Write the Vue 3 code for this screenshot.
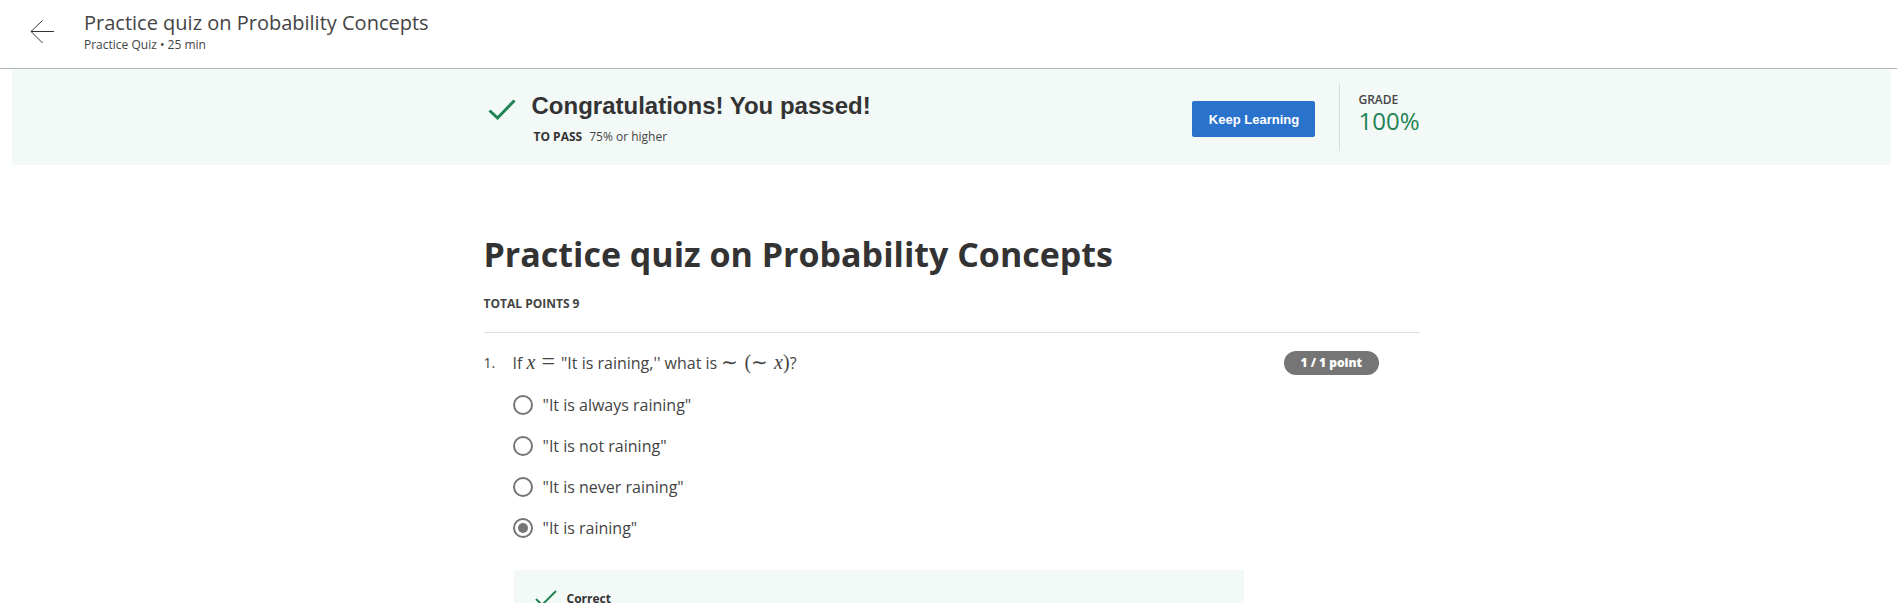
<script setup>
import { ref } from 'vue'

const options = [
  '"It is always raining"',
  '"It is not raining"',
  '"It is never raining"',
  '"It is raining"',
]
const answer = ref(3)
</script>

<template>
  <div class="page">
    <header class="top">
      <a class="back" href="#" aria-label="Back">
        <svg width="24" height="24" viewBox="0 0 24 24" fill="none" stroke="#333" stroke-width="1">
          <path d="M24 11.5H1M12.5 0.5L1 11.5L12.5 23" />
        </svg>
      </a>
      <div>
        <div class="top-title">Practice quiz on Probability Concepts</div>
        <div class="top-sub">Practice Quiz • 25 min</div>
      </div>
    </header>

    <section class="banner">
      <div class="column banner-row">
        <svg class="tick" width="28" height="22" viewBox="0 0 28 22" fill="none" stroke="#1f8354" stroke-width="3">
          <path d="M1.5 11.5L9.5 19L26.5 1.5" />
        </svg>
        <div class="result">
          <h2>Congratulations! You passed!</h2>
          <p><b>TO PASS</b><span>75% or higher</span></p>
        </div>
        <button class="keep" type="button">Keep Learning</button>
        <div class="grade">
          <div class="grade-label">GRADE</div>
          <div class="grade-value">100%</div>
        </div>
      </div>
    </section>

    <main class="content">
      <div class="column">
        <h1>Practice quiz on Probability Concepts</h1>
        <div class="total">TOTAL POINTS 9</div>
        <div class="question">
          <div class="number">1.</div>
          <div class="body">
            <fieldset>
              <legend>If <span class="math"><i>x</i><span class="rel">=</span></span>"It is raining,'' what is <span class="math">∼<span class="open">(</span>∼ <i class="arg">x</i>)</span>?</legend>
              <label v-for="(text, i) in options" :key="i" class="option">
                <input v-model="answer" type="radio" name="q1" :value="i" />
                <span>{{ text }}</span>
              </label>
            </fieldset>
            <div class="feedback">
              <svg width="22" height="17" viewBox="0 0 22 17" fill="none" stroke="#1f8354" stroke-width="2">
                <path d="M1 9L7 15L21 1" />
              </svg>
              <b>Correct</b>
            </div>
          </div>
          <div class="points">1 / 1 point</div>
        </div>
      </div>
    </main>
  </div>
</template>

<style>
html,
body {
  overflow: hidden;
}
</style>

<style scoped>
.page {
  height: 100vh;
  overflow: hidden;
  background: #fff;
  color: #444;
  font-family: "Open Sans", "Liberation Sans", sans-serif;
}
h1, h2, p, fieldset, legend {
  margin: 0;
  padding: 0;
  border: 0;
}
h1, h2, b {
  color: #333;
}
.top {
  display: flex;
  gap: 30px;
  padding: 9px 30px 15px;
  border-bottom: 1px solid #b0b6b5;
}
.back {
  height: 24px;
  margin-top: 11px;
}
.back svg, .tick, .feedback svg {
  display: block;
}
.top-title {
  font-size: 20px;
  line-height: 28px;
}
.top-sub {
  font-size: 12px;
  line-height: 16px;
}
.banner {
  margin: 0 6px 0 12px;
  background: #f3f9f7;
}
.column {
  max-width: 936px;
  margin: 0 auto;
}
.banner-row {
  display: flex;
  align-items: flex-start;
  padding: 14px 0;
}
.tick {
  margin: 16px 16px 0 4px;
}
.result {
  flex: 1;
}
.result h2 {
  font-family: "Liberation Sans", Arial, sans-serif;
  font-size: 24px;
  line-height: 46px;
}
.result p {
  padding-left: 2px;
  font-size: 12px;
  line-height: 16px;
}
.result b {
  margin-right: 7px;
  font-weight: 700;
}
.keep {
  width: 123px;
  height: 36px;
  margin-top: 18px;
  padding: 0;
  border: 0;
  border-radius: 2px;
  background: #2a73cc;
  color: #fff;
  font-family: "Liberation Sans", Arial, sans-serif;
  font-size: 13px;
  font-weight: 700;
}
.grade {
  height: 68px;
  box-sizing: border-box;
  margin-left: 24px;
  padding: 8px 0 0 18px;
  border-left: 1px solid #d8dedc;
}
.grade-label {
  font-size: 12px;
  line-height: 18px;
  font-weight: 600;
}
.grade-value {
  color: #1f8354;
  font-size: 24px;
  line-height: 24px;
}
.content {
  margin: 0 6px 0 12px;
  padding-top: 66px;
}
h1 {
  font-size: 34px;
  line-height: 46px;
  font-weight: 700;
}
.total {
  padding: 19px 0 20px;
  border-bottom: 1px solid #e0e0e0;
  font-size: 12px;
  line-height: 16px;
  font-weight: 700;
}
.question {
  display: flex;
  align-items: flex-start;
  padding-top: 18px;
}
.number {
  width: 29px;
  font-size: 14px;
  line-height: 24px;
}
.body {
  width: 731px;
}
legend {
  font-size: 16px;
  line-height: 25px;
}
.math {
  font-family: "Liberation Serif", serif;
  font-size: 20px;
  line-height: 20px;
}
.rel {
  margin: 0 6px;
  font-size: 24px;
}
.open {
  margin-left: 6px;
}
.arg {
  margin-left: 1px;
}
.option {
  display: flex;
  align-items: center;
  gap: 10px;
  height: 24px;
  margin-top: 17px;
  font-size: 16px;
}
.option input {
  display: grid;
  place-items: center;
  appearance: none;
  width: 20px;
  height: 20px;
  margin: 0;
  border: 2px solid #757575;
  border-radius: 50%;
}
.option input:checked::before {
  content: "";
  width: 10px;
  height: 10px;
  border-radius: 50%;
  background: #757575;
}
.feedback {
  display: flex;
  align-items: center;
  gap: 10px;
  margin: 30px 0 0 1px;
  padding: 20px 20px 24px 21px;
  background: #f3f9f7;
  font-size: 12px;
  line-height: 16px;
}
.points {
  margin-left: 40px;
  padding: 0 17px;
  border-radius: 12px;
  background: #757575;
  color: #fff;
  font-size: 12px;
  line-height: 24px;
  font-weight: 800;
}
</style>
